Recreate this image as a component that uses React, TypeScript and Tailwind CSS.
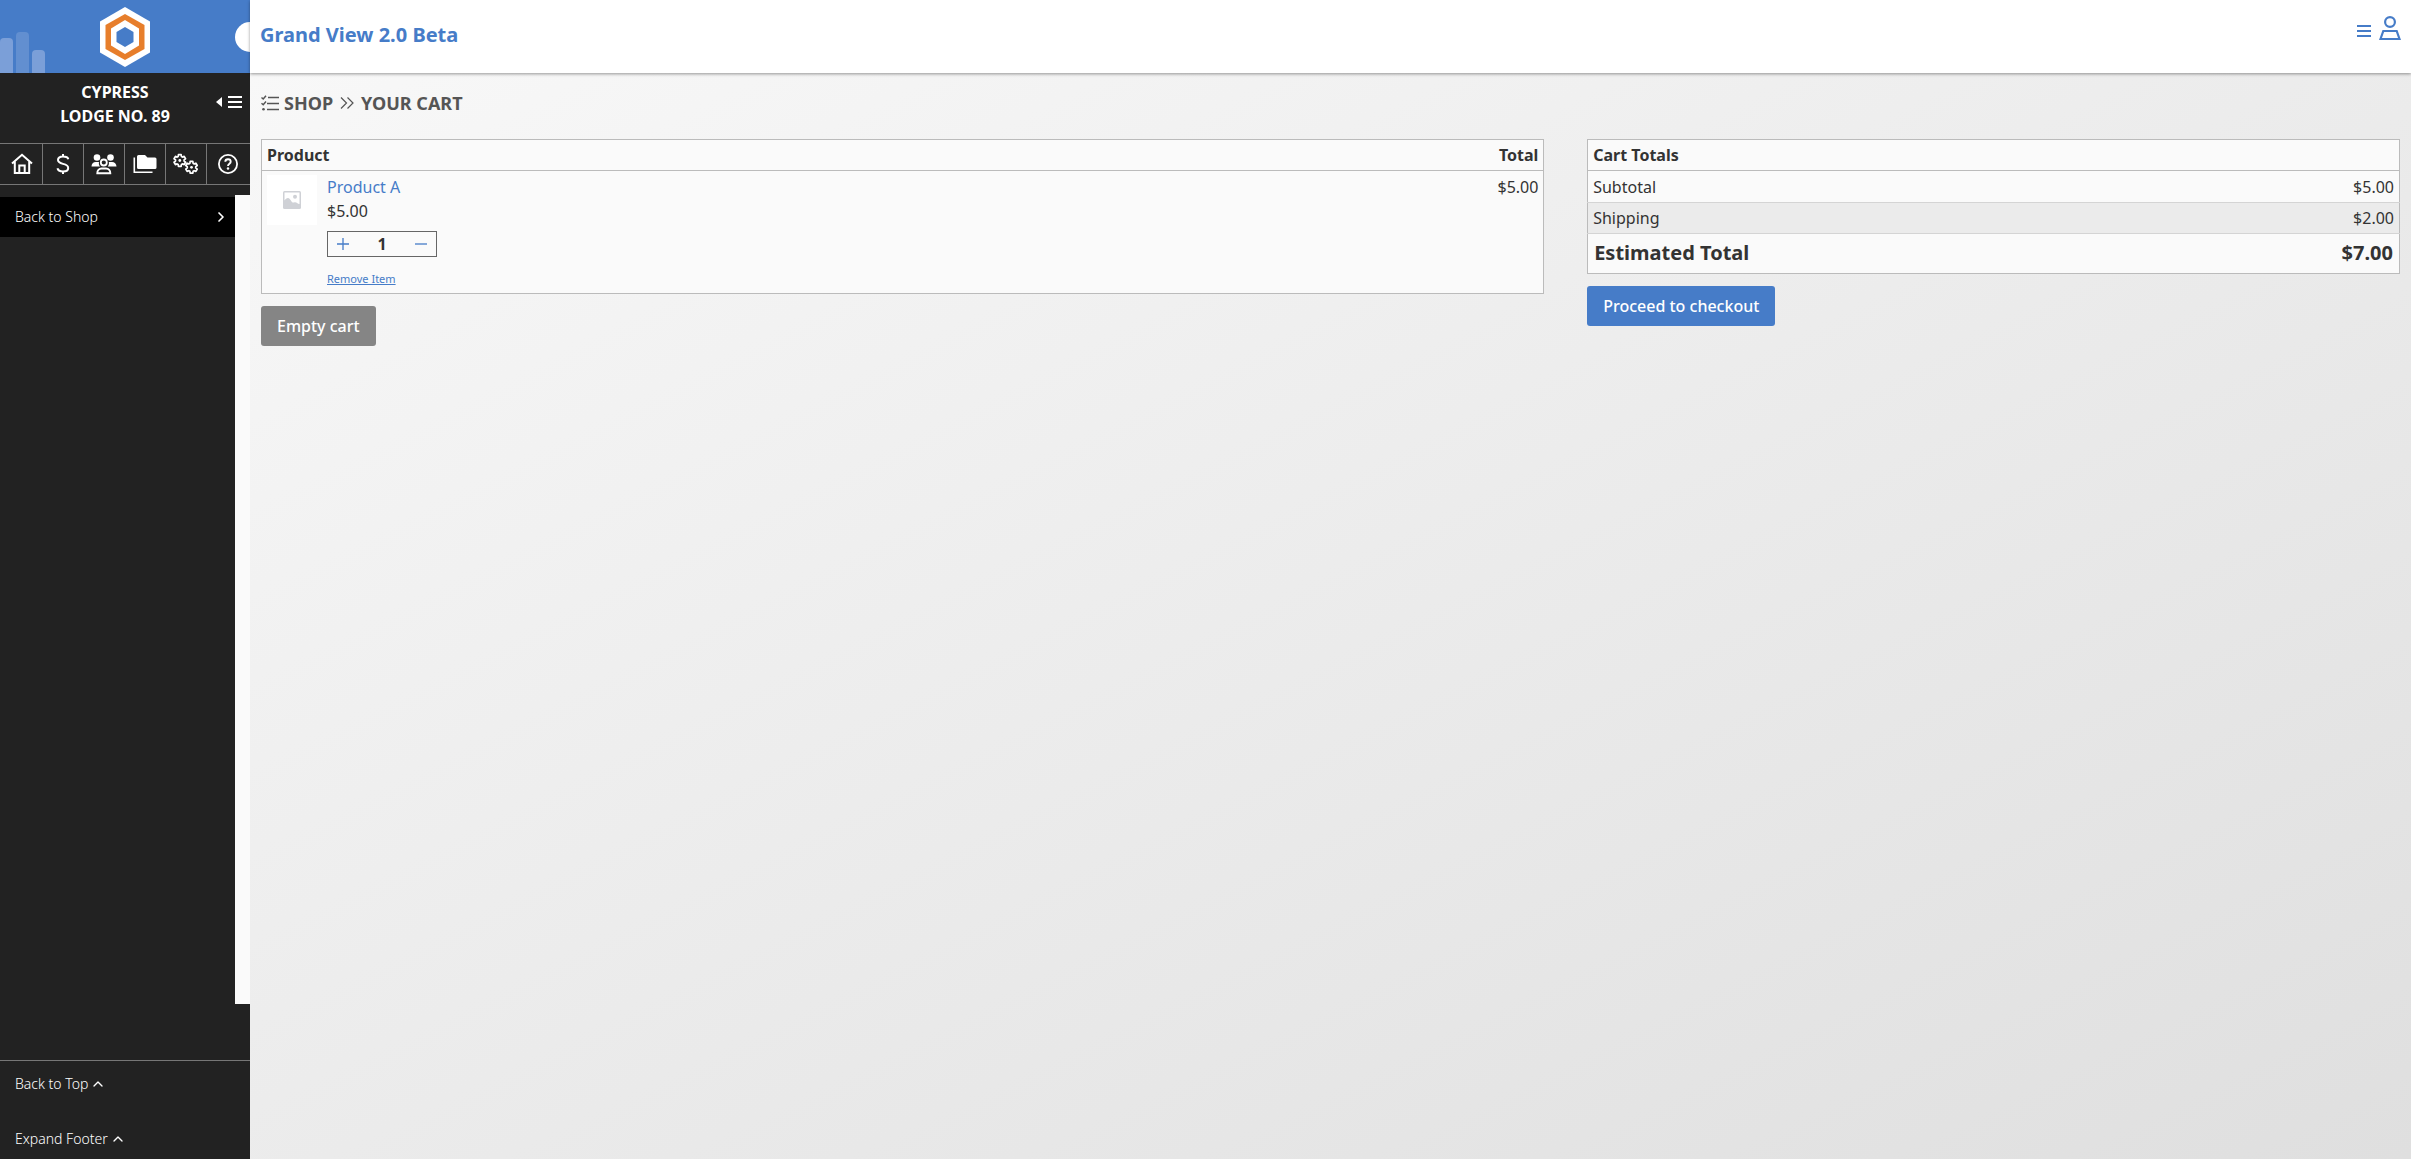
import { useState, type ReactNode } from "react";
import { ChevronRight, ChevronUp } from "lucide-react";

const NAV_ITEMS: { label: string; icon: ReactNode }[] = [
  { label: "Home", icon: <HomeIcon /> },
  { label: "Finances", icon: <DollarIcon /> },
  { label: "Members", icon: <MembersIcon /> },
  { label: "Files", icon: <FoldersIcon /> },
  { label: "Settings", icon: <GearsIcon /> },
  { label: "Help", icon: <HelpIcon /> },
];

const UNIT_PRICE = 5;
const SHIPPING = 2;

const money = (value: number) => `$${value.toFixed(2)}`;

function Logo() {
  return (
    <svg viewBox="0 0 50 60" className="h-[60px] w-[50px]" aria-hidden="true">
      <path d="M25 0 50 14.500V45.500L25 60 0 45.500V14.500Z" fill="#fff" />
      <path d="M25 7 44.500 18V42L25 53 5.500 42V18Z" fill="#e77e2b" />
      <path d="M25 13 39 21.500V38.500L25 47 11 38.500V21.500Z" fill="#fff" />
      <path d="M25 20 33.500 25V35L25 40 16.500 35V25Z" fill="#467cc8" />
    </svg>
  );
}

function HomeIcon() {
  return (
    <svg viewBox="0 0 22 22" className="size-[22px]" fill="none" stroke="currentColor" strokeWidth="2">
      <path d="M1 10.500 11 1.800 21 10.500M3.800 8.500V20H18.200V8.500M8.300 20V12.500H13.700V20" />
    </svg>
  );
}

function DollarIcon() {
  return (
    <svg viewBox="0 0 14 22" className="h-[22px] w-[14px]" fill="none" stroke="currentColor" strokeWidth="2">
      <path d="M7 1V4M7 18V21M12.300 6.200C11.800 4.400 9.800 3.600 7 3.600 4 3.600 2 4.900 2 7.100 2 9.500 4.300 10.200 7 10.900 9.800 11.600 12.200 12.400 12.200 14.900 12.200 17.200 10 18.400 7 18.400 4 18.400 1.900 17.400 1.500 15.300" />
    </svg>
  );
}

function MembersIcon() {
  return (
    <svg viewBox="0 0 26 22" className="h-[22px] w-[26px]" fill="currentColor">
      <circle cx="6" cy="4.500" r="3.300" />
      <circle cx="19.500" cy="4.500" r="3.300" />
      <path d="M.5 13.500C.5 10.800 2.200 9 4.800 9H8C7.600 10.800 8 12.300 9 13.500ZM25.500 13.500C25.500 10.800 23.500 9 21 9H17.800C18.200 10.800 17.800 12.300 16.800 13.500Z" />
      <circle cx="12.800" cy="9.500" r="3" fill="none" stroke="currentColor" strokeWidth="1.800" />
      <path
        d="M6.300 20.200C6.300 17.500 8 15.500 10.500 15.500H15.100C17.600 15.500 19.300 17.500 19.300 20.200Z"
        fill="none"
        stroke="currentColor"
        strokeWidth="1.900"
      />
    </svg>
  );
}

function FoldersIcon() {
  return (
    <svg viewBox="0 0 24 20" className="h-[20px] w-[24px]" fill="currentColor">
      <path d="M5.500 1H12L14.500 3.500H22Q23.500 3.500 23.500 5V13.500Q23.500 15 22 15H5.500Q4 15 4 13.500V2.500Q4 1 5.500 1Z" />
      <path d="M1.300 3.500V18.200H19.500" fill="none" stroke="currentColor" strokeWidth="1.600" />
    </svg>
  );
}

function GearsIcon() {
  const gear =
    "M-1.6-4-1.35-5.85H1.35L1.6-4 2.66-3.39 4.39-4.09 5.74-1.76 4.26-.61V.61L5.74 1.76 4.39 4.09 2.66 3.39 1.6 4 1.35 5.85H-1.35L-1.6 4-2.66 3.39-4.39 4.09-5.74 1.76-4.26 .61V-.61L-5.74-1.76-4.39-4.09-2.66-3.39Z";
  return (
    <svg viewBox="0 0 26 22" className="h-[22px] w-[26px]" fill="none" stroke="currentColor" strokeWidth="1.700" strokeLinejoin="round">
      <g transform="translate(6.800 7.500)">
        <path d={gear} />
        <circle r="1.400" fill="currentColor" stroke="none" />
      </g>
      <g transform="translate(18.500 14.300)">
        <path d={gear} />
        <circle r="1.400" fill="currentColor" stroke="none" />
      </g>
    </svg>
  );
}

function HelpIcon() {
  return (
    <svg viewBox="0 0 20 20" className="size-[20px]" fill="none" stroke="currentColor" strokeWidth="1.800">
      <circle cx="10" cy="10" r="9.100" />
      <path d="M7.300 7.800C7.300 6.300 8.500 5.300 10 5.300S12.700 6.300 12.700 7.700C12.700 9.700 10 9.700 10 12" strokeWidth="1.900" />
      <circle cx="10" cy="14.500" r="1.200" fill="currentColor" stroke="none" />
    </svg>
  );
}

function BarsIcon() {
  return (
    <svg viewBox="0 0 14 12" className="h-[12px] w-[14px]" stroke="currentColor" strokeWidth="1.800">
      <path d="M0 1H14M0 6H14M0 11H14" />
    </svg>
  );
}

function UserIcon() {
  return (
    <svg viewBox="0 0 22 24" className="h-[24px] w-[22px]" fill="none" stroke="currentColor" strokeWidth="2.200">
      <circle cx="11" cy="6" r="4.900" />
      <path d="M4.300 15H17.700L20.500 23H1.500Z" />
    </svg>
  );
}

function ChecklistIcon() {
  return (
    <svg viewBox="0 0 18 16" className="h-4 w-[18px]" fill="none" stroke="currentColor" strokeWidth="1.500">
      <path d="M7 2.500H18M6 8.500H18M6 14.500H18M.5 2.500 2.200 4 5 .8M.5 8.300 2.200 9.800 5 6.600" />
      <circle cx="2.500" cy="14.300" r="1.300" fill="currentColor" stroke="none" />
    </svg>
  );
}

function ImagePlaceholder() {
  return (
    <span className="flex size-[50px] items-center justify-center bg-white">
      <svg viewBox="0 0 18 18" className="size-[18px]" role="img" aria-label="No image">
        <rect width="18" height="18" rx="1.500" fill="#cfd1d6" />
        <path d="M1.500 1.500H16.500V13C14 13 13.500 10.500 11 11.500 8.500 12.500 7.500 7 5 7 3.500 7 2.500 8 1.500 9.500Z" fill="#fff" />
        <circle cx="12" cy="5.800" r="2" fill="#cfd1d6" />
      </svg>
    </span>
  );
}

function Sidebar() {
  return (
    <aside className="flex w-[250px] shrink-0 flex-col bg-[#222] text-white">
      <div className="relative flex h-[73px] items-center justify-center overflow-hidden bg-[#467cc8]">
        <div className="absolute bottom-0 left-0 flex items-end gap-[3px]">
          <span className="h-[35px] w-[13px] rounded-t bg-[#7b9fd8]" />
          <span className="h-[41px] w-[13px] rounded-t bg-[#628fd0]" />
          <span className="h-[23px] w-[13px] rounded-t bg-[#7b9fd8]" />
        </div>
        <Logo />
        <span className="absolute -right-[15px] top-[22px] size-[30px] rounded-full bg-white" />
      </div>

      <div className="flex h-[70px] items-center pr-2 pb-2">
        <h2 className="flex-1 pl-3.5 text-center text-base font-bold">
          CYPRESS
          <br />
          LODGE NO. 89
        </h2>
        <button aria-label="Collapse menu" className="flex items-center gap-1.5 pb-1">
          <svg viewBox="0 0 6 10" className="h-[10px] w-[6px]" fill="currentColor">
            <path d="M6 0V10L0 5Z" />
          </svg>
          <BarsIcon />
        </button>
      </div>

      <nav className="flex border-y border-[#777] pl-0.5">
        {NAV_ITEMS.map((item) => (
          <a
            key={item.label}
            href="#"
            aria-label={item.label}
            className="flex h-10 w-[41px] items-center justify-center border-r border-[#777] last:border-r-0"
          >
            {item.icon}
          </a>
        ))}
      </nav>

      <div className="mt-2.5 mb-14 flex flex-1">
        <div className="flex-1 pt-0.5">
          <a href="#" className="flex h-10 items-center justify-between bg-black pr-1.5 pl-[15px] text-sm font-[350]">
            Back to Shop
            <ChevronRight className="size-4" strokeWidth={2.5} />
          </a>
        </div>
        <div className="w-[15px] bg-[#fafafa]" />
      </div>

      <div className="flex flex-col border-t border-[#777] text-sm font-[350]">
        <a href="#" className="flex h-[46px] items-center gap-0.5 px-[15px]">
          Back to Top
          <ChevronUp className="size-4" />
        </a>
        <button className="flex h-[52px] items-center gap-0.5 px-[15px] pt-3">
          Expand Footer
          <ChevronUp className="size-4" />
        </button>
      </div>
    </aside>
  );
}

export default function App() {
  const [quantity, setQuantity] = useState(1);
  const subtotal = quantity * UNIT_PRICE;

  return (
    <div className="flex min-h-screen bg-[#f4f4f4] font-['Noto_Sans',sans-serif] text-base text-[#333]">
      <Sidebar />

      <div className="flex flex-1 flex-col">
        <header className="z-10 flex h-[73px] justify-between bg-white px-2.5 text-[#467cc8] shadow-[0_1px_3px_rgba(0,0,0,0.4)]">
          <h1 className="pt-5 text-xl leading-[30px] font-bold">Grand View 2.0 Beta</h1>
          <div className="flex items-start gap-2 pt-4">
            <button aria-label="Menu" className="pt-[9px]">
              <BarsIcon />
            </button>
            <button aria-label="Account">
              <UserIcon />
            </button>
          </div>
        </header>

        <main className="flex-1 bg-linear-to-br from-[#f8f8f8] to-[#dfdfdf] px-[11px] pt-4">
          <h2 className="flex items-center gap-[5px] text-lg font-bold text-[#555]">
            <ChecklistIcon />
            SHOP
            <svg viewBox="0 0 14 12" className="mx-0.5 h-[12px] w-[14px]" fill="none" stroke="currentColor" strokeWidth="1.200">
              <path d="M1 .5 6.500 6 1 11.500M7.500 .5 13 6 7.500 11.500" />
            </svg>
            YOUR CART
          </h2>

          <div className="mt-[22px] grid grid-cols-[60fr_38fr] items-start gap-x-[2%]">
            <section>
              <table className="w-full border border-[#bbb] bg-[#fafafa]">
                <thead>
                  <tr className="h-[31px] border-b border-[#bbb]">
                    <th className="px-[5px] text-left">Product</th>
                    <th className="px-[5px] text-right">Total</th>
                  </tr>
                </thead>
                <tbody>
                  <tr className="align-top">
                    <td className="flex gap-2.5 px-[5px] pt-1 pb-1.5">
                      <ImagePlaceholder />
                      <div>
                        <a href="#" className="text-[#467cc8]">
                          Product A
                        </a>
                        <p>{money(UNIT_PRICE)}</p>
                        <div className="mt-2 flex h-[26px] w-[110px] items-center border border-[#666]">
                          <button
                            aria-label="Increase quantity"
                            onClick={() => setQuantity(quantity + 1)}
                            className="flex w-[30px] justify-center text-[#467cc8]"
                          >
                            <svg viewBox="0 0 12 12" className="size-[12px]" stroke="currentColor" strokeWidth="1.300">
                              <path d="M6 0V12M0 6H12" />
                            </svg>
                          </button>
                          <input
                            aria-label="Quantity"
                            value={quantity}
                            onChange={(e) => setQuantity(Number(e.target.value) || 1)}
                            className="w-0 flex-1 text-center font-bold"
                          />
                          <button
                            aria-label="Decrease quantity"
                            onClick={() => setQuantity(Math.max(1, quantity - 1))}
                            className="flex w-[30px] justify-center text-[#467cc8]"
                          >
                            <svg viewBox="0 0 12 12" className="size-[12px]" stroke="currentColor" strokeWidth="1.300">
                              <path d="M0 6H12" />
                            </svg>
                          </button>
                        </div>
                        <button className="mt-3.5 block text-[11px] leading-4 text-[#467cc8] underline">
                          Remove Item
                        </button>
                      </div>
                    </td>
                    <td className="px-[5px] pt-1 text-right">{money(subtotal)}</td>
                  </tr>
                </tbody>
              </table>
              <button className="mt-3 h-10 rounded-[3px] bg-[#858585] px-4 font-medium text-white">
                Empty cart
              </button>
            </section>

            <section>
              <table className="w-full border border-[#bbb] bg-[#fafafa]">
                <thead>
                  <tr className="h-[31px] border-b border-[#bbb]">
                    <th colSpan={2} className="px-[5px] text-left">
                      Cart Totals
                    </th>
                  </tr>
                </thead>
                <tbody>
                  <tr className="h-8 border-b border-[#d4d4d4]">
                    <td className="px-[5px]">Subtotal</td>
                    <td className="px-[5px] text-right">{money(subtotal)}</td>
                  </tr>
                  <tr className="h-[31px] border-b border-[#d4d4d4] bg-[#ebebeb]">
                    <td className="px-[5px]">Shipping</td>
                    <td className="px-[5px] text-right">{money(SHIPPING)}</td>
                  </tr>
                  <tr className="h-10 text-xl font-bold">
                    <td className="px-1.5 pb-0.5">Estimated Total</td>
                    <td className="px-1.5 pb-0.5 text-right">{money(subtotal + SHIPPING)}</td>
                  </tr>
                </tbody>
              </table>
              <button className="mt-3 h-10 rounded-[3px] bg-[#467cc8] px-4 font-medium text-white">
                Proceed to checkout
              </button>
            </section>
          </div>
        </main>
      </div>
    </div>
  );
}
